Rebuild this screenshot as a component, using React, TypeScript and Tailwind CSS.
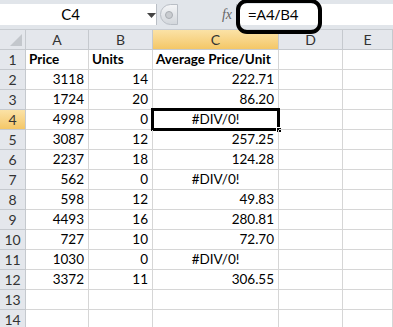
import React from "react";

const cols = ["A", "B", "C", "D", "E"];

// price, units, avg (null => #DIV/0!)
const rows: [number, number, string | null][] = [
  [3118, 14, "222.71"],
  [1724, 20, "86.20"],
  [4998, 0, null],
  [3087, 12, "257.25"],
  [2237, 18, "124.28"],
  [562, 0, null],
  [598, 12, "49.83"],
  [4493, 16, "280.81"],
  [727, 10, "72.70"],
  [1030, 0, null],
  [3372, 11, "306.55"],
];

const font = { fontFamily: "Lato, 'Open Sans', sans-serif" };

function RowHead({ n, active }: { n: number; active?: boolean }) {
  return (
    <div
      className={`h-[20px] flex items-center justify-center border-r border-b border-[#c5c9ce] text-[14px] text-[#333] ${
        active ? "bg-gradient-to-b from-[#fbe2a6] to-[#f4c766]" : "bg-[#e4e7ec]"
      }`}
    >
      {n}
    </div>
  );
}

function Cell({
  children,
  align = "right",
  bold,
  selected,
}: {
  children?: React.ReactNode;
  align?: "left" | "right" | "center";
  bold?: boolean;
  selected?: boolean;
}) {
  const a = align === "right" ? "justify-end pr-[4px]" : align === "center" ? "justify-center" : "justify-start pl-[3px]";
  return (
    <div
      className={`relative h-[20px] flex items-center ${a} border-r border-b border-[#d6d6d6] text-[13.5px] text-black whitespace-nowrap ${
        bold ? "font-bold" : ""
      }`}
    >
      {children}
      {selected && (
        <>
          <div className="absolute left-[-2px] top-[-2px] right-[-2px] bottom-[-2px] border-[3px] border-black" />
          <div className="absolute right-[-4px] bottom-[-4px] w-[6px] h-[6px] bg-black border border-white" />
        </>
      )}
    </div>
  );
}

export default function App() {
  return (
    <div className="relative w-[393px] h-[327px] overflow-hidden bg-white" style={font}>
      {/* formula bar */}
      <div className="h-[30px] bg-[#e1e5ea] border-b border-[#c8ccd1] flex items-start pt-[4px]">
        <div className="relative w-[157px] h-[21px] bg-white border-r border-[#b9bec5] flex items-center">
          <span className="w-[141px] text-center text-[15px] text-black">C4</span>
          <svg width="9" height="5" viewBox="0 0 9 5" className="absolute left-[147px] top-[9px]">
            <path d="M0 0h9L4.5 5z" fill="#444" />
          </svg>
        </div>
        <div className="ml-[3px] w-[18px] h-[21px] rounded-l-full bg-gradient-to-b from-[#f4f5f7] to-[#d3d7dc] border border-[#b9bec5] flex items-center justify-center">
          <div className="w-[8px] h-[8px] rounded-full bg-[#c9ccd0] border border-[#a9adb2]" />
        </div>
        <div className="w-[58px] h-[21px] flex items-center justify-end pr-[4px]">
          <span className="text-[14px] italic text-[#666]" style={{ fontFamily: "'Liberation Serif', serif" }}>
            fx
          </span>
        </div>
        <div className="flex-1 h-[21px] bg-white border-l border-[#b9bec5] flex items-center pl-[11px]">
          <span className="text-[15px] text-black" style={{ fontFamily: "'Open Sans', sans-serif" }}>
            =A4/B4
          </span>
        </div>
      </div>

      {/* annotation ring */}
      <div className="absolute left-[236px] top-[-1px] w-[86px] h-[35px] border-[4px] border-black rounded-[11px]" />

      {/* sheet grid */}
      <div className="grid grid-cols-[26px_63px_64px_126px_64px_1fr]">
        <div className="relative h-[20px] bg-[#e4e7ec] border-r border-b border-[#c5c9ce]">
          <svg width="12" height="12" viewBox="0 0 12 12" className="absolute right-[3px] bottom-[3px]">
            <path d="M12 0V12H0z" fill="#c3c7cc" />
          </svg>
        </div>
        {cols.map((c) => (
          <div
            key={c}
            className={`h-[20px] flex items-center justify-center border-r border-b border-[#c5c9ce] text-[14px] text-[#333] ${
              c === "C" ? "bg-gradient-to-b from-[#fbe2a6] to-[#f4c766]" : "bg-[#e4e7ec]"
            }`}
          >
            {c}
          </div>
        ))}

        <RowHead n={1} />
        <Cell align="left" bold>Price</Cell>
        <Cell align="left" bold>Units</Cell>
        <Cell align="left" bold>Average Price/Unit</Cell>
        <Cell />
        <Cell />

        {rows.map(([p, u, avg], i) => (
          <React.Fragment key={i}>
            <RowHead n={i + 2} active={i + 2 === 4} />
            <Cell>{p}</Cell>
            <Cell>{u}</Cell>
            <Cell align={avg ? "right" : "center"} selected={i + 2 === 4}>
              {avg ?? "#DIV/0!"}
            </Cell>
            <Cell />
            <Cell />
          </React.Fragment>
        ))}

        {[13, 14].map((n) => (
          <React.Fragment key={n}>
            <RowHead n={n} />
            <Cell />
            <Cell />
            <Cell />
            <Cell />
            <Cell />
          </React.Fragment>
        ))}
      </div>
    </div>
  );
}
